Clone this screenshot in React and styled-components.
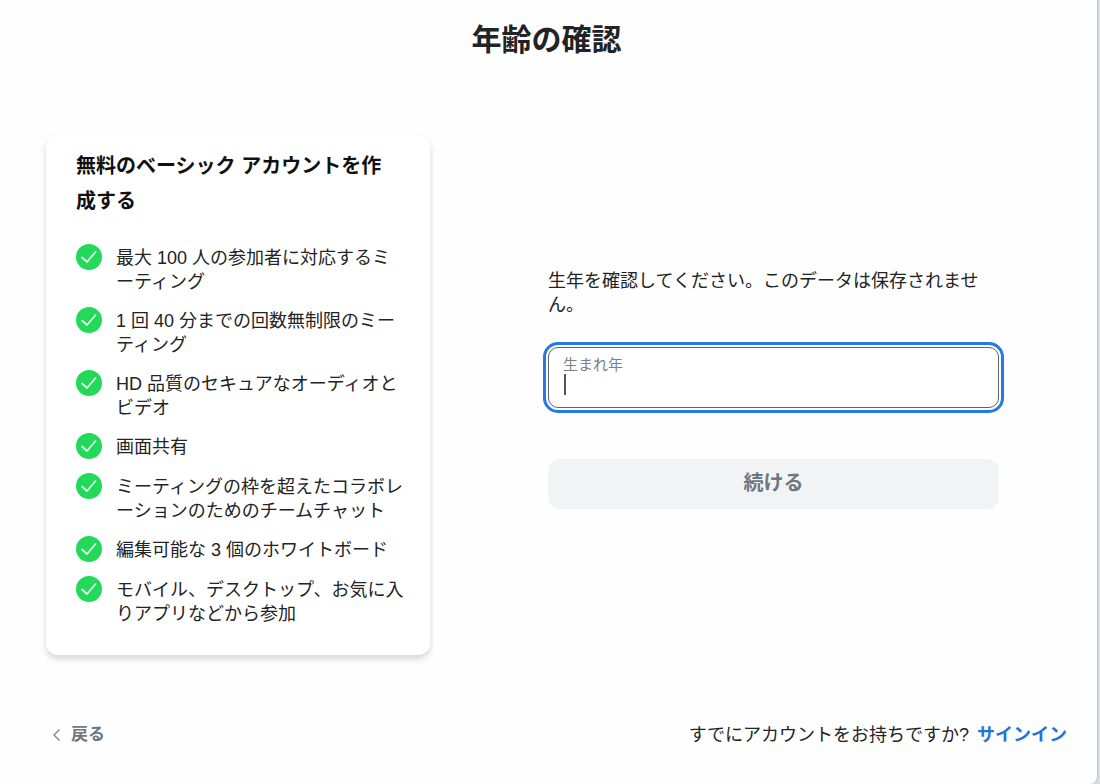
import React, { useState } from "react";
import styled, { createGlobalStyle } from "styled-components";

const GlobalStyle = createGlobalStyle`
  *, *::before, *::after { box-sizing: border-box; }
  body {
    margin: 0;
    background: #d9dadc;
    color: #222325;
    font-family: "Liberation Sans", "Noto Sans CJK JP", sans-serif;
    font-size: 18px;
    line-height: 24px;
  }
`;

const Dialog = styled.div`
  display: flex;
  flex-direction: column;
  min-height: 100vh;
  margin-right: 2px;
  background: #fefefe;
  border-right: 1px solid #c4c5c7;
  border-bottom-right-radius: 8px;
`;

const Title = styled.h1`
  margin: 0;
  padding: 20px 4px 20px 0;
  font-size: 30px;
  line-height: 40px;
  font-weight: 700;
  text-align: center;
`;

const Content = styled.main`
  display: grid;
  grid-template-columns: 384px 1fr;
  gap: 118px;
  padding: 55px 98px 0 46px;
`;

const Card = styled.section`
  padding: 14px 25px 29px 30px;
  border-radius: 12px;
  background: #fff;
  box-shadow: 0 4px 6px rgba(0, 0, 0, 0.16);
`;

const CardTitle = styled.h2`
  margin: 0 0 25px;
  padding-right: 12px;
  font-size: 20px;
  line-height: 35px;
  font-weight: 700;
  color: #111;
`;

const FeatureList = styled.ul`
  display: flex;
  flex-direction: column;
  gap: 13px;
  margin: 0;
  padding: 0;
  list-style: none;
`;

const Feature = styled.li`
  display: flex;
  align-items: flex-start;
  gap: 14px;
  min-height: 27px;
`;

const CheckMark = styled.svg`
  flex: none;
  width: 26px;
  height: 26px;
`;

const FeatureText = styled.span`
  flex: 1;
  padding-top: 2px;
`;

const Form = styled.form`
  padding-top: 134px;
`;

const Prompt = styled.p`
  margin: 0;
`;

const Field = styled.div`
  position: relative;
  margin: 30px 0 51px;
`;

const FieldLabel = styled.label`
  position: absolute;
  top: 8px;
  left: 15px;
  font-size: 15px;
  line-height: 20px;
  color: #7b7f88;
`;

const YearInput = styled.input`
  display: block;
  width: 100%;
  height: 61px;
  padding: 24px 15px 8px;
  border: 1px solid #60636b;
  border-radius: 10px;
  outline: 3px solid #2379e6;
  outline-offset: 2px;
  background: #fff;
  color: inherit;
  font: inherit;
  caret-color: transparent;
`;

const Caret = styled.span`
  position: absolute;
  top: 27px;
  left: 16px;
  width: 2px;
  height: 21px;
  background: #555;
  pointer-events: none;
`;

const ContinueButton = styled.button`
  display: block;
  width: 100%;
  height: 50px;
  padding: 0 0 2px;
  border: 0;
  border-radius: 12px;
  background: #f1f3f5;
  color: #6e7680;
  font: inherit;
  font-size: 20px;
  font-weight: 700;
`;

const Footer = styled.footer`
  display: flex;
  justify-content: space-between;
  align-items: center;
  margin-top: auto;
  padding: 0 30px 37px 52px;
`;

const BackButton = styled.button`
  display: flex;
  align-items: center;
  gap: 10px;
  padding: 0;
  border: 0;
  background: none;
  color: #6e7680;
  font: inherit;
  font-size: 17px;
  font-weight: 700;
`;

const SignIn = styled.p`
  margin: 0;
`;

const SignInLink = styled.a`
  margin-left: 8px;
  color: #2272d8;
  font-weight: 700;
  text-decoration: none;
`;

const features = [
  "最大 100 人の参加者に対応するミーティング",
  "1 回 40 分までの回数無制限のミーティング",
  "HD 品質のセキュアなオーディオとビデオ",
  "画面共有",
  "ミーティングの枠を超えたコラボレーションのためのチームチャット",
  "編集可能な 3 個のホワイトボード",
  "モバイル、デスクトップ、お気に入りアプリなどから参加",
];

export default function App() {
  const [year, setYear] = useState("");

  return (
    <>
      <GlobalStyle />
      <Dialog lang="ja">
        <Title>年齢の確認</Title>
        <Content>
          <Card>
            <CardTitle>無料のベーシック アカウントを作成する</CardTitle>
            <FeatureList>
              {features.map((text) => (
                <Feature key={text}>
                  <CheckMark viewBox="0 0 26 26" aria-hidden="true">
                    <circle cx="13" cy="13" r="13" fill="#23d959" />
                    <path
                      d="M6 13.5 11 18 19.5 8"
                      fill="none"
                      stroke="#e9fbee"
                      strokeWidth="1.7"
                      strokeLinecap="round"
                      strokeLinejoin="round"
                    />
                  </CheckMark>
                  <FeatureText>{text}</FeatureText>
                </Feature>
              ))}
            </FeatureList>
          </Card>
          <Form onSubmit={(event) => event.preventDefault()}>
            <Prompt>生年を確認してください。このデータは保存されません。</Prompt>
            <Field>
              <FieldLabel htmlFor="birth-year">生まれ年</FieldLabel>
              <YearInput
                id="birth-year"
                inputMode="numeric"
                value={year}
                onChange={(event) => setYear(event.target.value)}
              />
              {year === "" && <Caret />}
            </Field>
            <ContinueButton type="submit" disabled={year === ""}>
              続ける
            </ContinueButton>
          </Form>
        </Content>
        <Footer>
          <BackButton type="button">
            <svg width="9" height="14" viewBox="0 0 9 14" aria-hidden="true">
              <path d="M7.5 1.5 2 7l5.5 5.5" fill="none" stroke="#83878e" strokeWidth="1.4" />
            </svg>
            戻る
          </BackButton>
          <SignIn>
            すでにアカウントをお持ちですか?
            <SignInLink href="#signin">サインイン</SignInLink>
          </SignIn>
        </Footer>
      </Dialog>
    </>
  );
}
